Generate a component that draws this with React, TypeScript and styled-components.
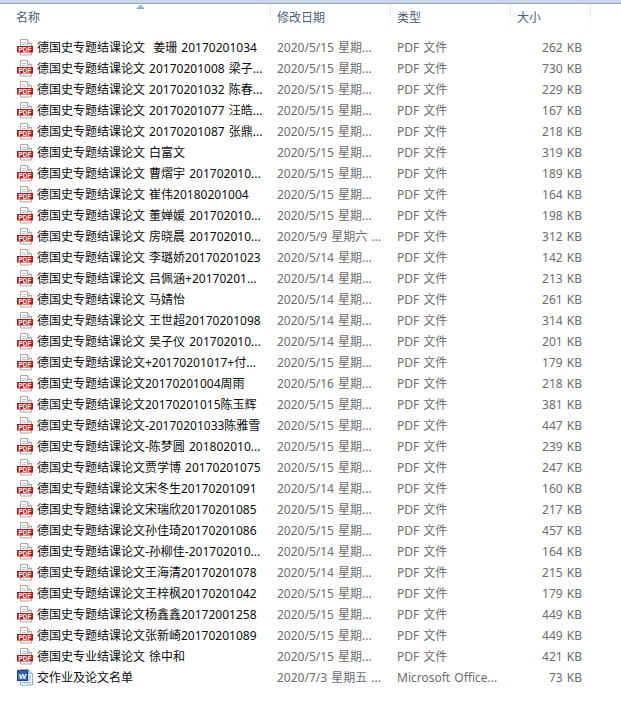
import React from "react";
import styled, { createGlobalStyle } from "styled-components";

const Global = createGlobalStyle`
  html, body { margin: 0; padding: 0; background: #fff; }
  body { font-family: "Noto Sans", "Noto Sans CJK SC", sans-serif; font-size: 12px; word-spacing: 1px; }
`;

const Page = styled.div`
  width: 621px;
  height: 702px;
  overflow: hidden;
  background: #fff;
`;

const TopBand = styled.div`
  height: 3px;
  background: #c9d6ea;
  border-bottom: 1px solid #97a3b4;
`;

const columns = "271px 120px 120px 80px";

const Header = styled.div`
  position: relative;
  display: grid;
  grid-template-columns: ${columns};
  height: 23px;
  margin-bottom: 10px;
`;

const HeaderCell = styled.div`
  padding-left: 6px;
  padding-top: 3px;
  line-height: 21px;
  color: #4c607a;
  border-right: 1px solid;
  border-image: linear-gradient(#dbe6f3, #eef3f9 70%, #fff) 1;
  box-sizing: border-box;
  &:first-child { padding-left: 16px; }
`;

const SortArrow = styled.svg`
  position: absolute;
  left: 136px;
  top: 0;
`;

const Row = styled.div`
  display: grid;
  grid-template-columns: ${columns};
  height: 21px;
  line-height: 21px;
  white-space: pre;
`;

const NameCell = styled.div`
  display: flex;
  align-items: center;
  gap: 4px;
  padding-left: 17px;
  color: #0c0c0c;
`;

const MetaCell = styled.div`
  padding-left: 6px;
  color: #6d6d6d;
`;

const SizeCell = styled.div`
  text-align: right;
  padding-right: 9px;
  color: #6d6d6d;
`;

const IconBox = styled.svg`
  flex: none;
  display: block;
`;

const PdfIcon = () => (
  <IconBox width="16" height="17" viewBox="0 0 16 17">
    <path d="M3.5.5h7l4 4v11.5h-11z" fill="#fbfbfb" stroke="#a9a9a9" />
    <path d="M10.5.5v4h4" fill="#eee" stroke="#a9a9a9" />
    <path d="M5 3.5h4M5 5.5h8" stroke="#c9c9c9" />
    <rect x="0" y="7" width="16" height="6.5" fill="#c01414" />
    <text x="8" y="12.6" textAnchor="middle" fontFamily="Liberation Sans" fontWeight="700" fontSize="6.4" fill="#fff">PDF</text>
  </IconBox>
);

const WordIcon = () => (
  <IconBox width="16" height="17" viewBox="0 0 16 17">
    <path d="M3.5.5h8l4 4v11.5h-12z" fill="#f7fafd" stroke="#8fa9c8" />
    <path d="M11.5.5v4h4" fill="#dfe9f4" stroke="#8fa9c8" />
    <path d="M11 7h3M11 9h3M11 11h3M5 13.5h9" stroke="#8fb0d6" />
    <rect x="0.5" y="1.5" width="10" height="10" fill="#2f66b4" stroke="#1d4586" />
    <text x="5.5" y="9.6" textAnchor="middle" fontFamily="Liberation Sans" fontWeight="700" fontSize="8" fill="#fff">W</text>
  </IconBox>
);

const P = "德国史专题结课论文";
const files: [string, string, string][] = [
  [P + "  姜珊 20170201034", "2020/5/15 星期...", "262 KB"],
  [P + " 20170201008 梁子...", "2020/5/15 星期...", "730 KB"],
  [P + " 20170201032 陈春...", "2020/5/15 星期...", "229 KB"],
  [P + " 20170201077 汪皓...", "2020/5/15 星期...", "167 KB"],
  [P + " 20170201087 张鼎...", "2020/5/15 星期...", "218 KB"],
  [P + " 白富文", "2020/5/15 星期...", "319 KB"],
  [P + " 曹熠宇 201702010...", "2020/5/15 星期...", "189 KB"],
  [P + " 崔伟20180201004", "2020/5/15 星期...", "164 KB"],
  [P + " 董婵媛 201702010...", "2020/5/15 星期...", "198 KB"],
  [P + " 房晓晨 201702010...", "2020/5/9 星期六 ...", "312 KB"],
  [P + " 李璐娇20170201023", "2020/5/14 星期...", "142 KB"],
  [P + " 吕佩涵+20170201...", "2020/5/14 星期...", "213 KB"],
  [P + " 马婧怡", "2020/5/14 星期...", "261 KB"],
  [P + " 王世超20170201098", "2020/5/14 星期...", "314 KB"],
  [P + " 吴子仪 201702010...", "2020/5/14 星期...", "201 KB"],
  [P + "+20170201017+付...", "2020/5/15 星期...", "179 KB"],
  [P + "20170201004周雨", "2020/5/16 星期...", "218 KB"],
  [P + "20170201015陈玉辉", "2020/5/15 星期...", "381 KB"],
  [P + "-20170201033陈雅雪", "2020/5/15 星期...", "447 KB"],
  [P + "-陈梦圆 201802010...", "2020/5/15 星期...", "239 KB"],
  [P + "贾学博 20170201075", "2020/5/15 星期...", "247 KB"],
  [P + "宋冬生20170201091", "2020/5/14 星期...", "160 KB"],
  [P + "宋瑞欣20170201085", "2020/5/15 星期...", "217 KB"],
  [P + "孙佳琦20170201086", "2020/5/15 星期...", "457 KB"],
  [P + "-孙柳佳-201702010...", "2020/5/14 星期...", "164 KB"],
  [P + "王海清20170201078", "2020/5/14 星期...", "215 KB"],
  [P + "王梓枫20170201042", "2020/5/15 星期...", "179 KB"],
  [P + "杨鑫鑫20172001258", "2020/5/15 星期...", "449 KB"],
  [P + "张新崎20170201089", "2020/5/15 星期...", "449 KB"],
  ["德国史专业结课论文 徐中和", "2020/5/15 星期...", "421 KB"],
];

export default function App() {
  return (
    <Page>
      <Global />
      <TopBand />
      <Header>
        <HeaderCell>名称</HeaderCell>
        <HeaderCell>修改日期</HeaderCell>
        <HeaderCell>类型</HeaderCell>
        <HeaderCell>大小</HeaderCell>
        <SortArrow width="9" height="6" viewBox="0 0 9 6">
          <path d="M1 4.5 4.5 1 8 4.5z" fill="#8fc3dd" stroke="#5a89a8" strokeWidth="0.6" />
        </SortArrow>
      </Header>
      {files.map(([name, date, size]) => (
        <Row key={name}>
          <NameCell><PdfIcon /><span>{name}</span></NameCell>
          <MetaCell>{date}</MetaCell>
          <MetaCell>PDF 文件</MetaCell>
          <SizeCell>{size}</SizeCell>
        </Row>
      ))}
      <Row>
        <NameCell><WordIcon /><span>交作业及论文名单</span></NameCell>
        <MetaCell>2020/7/3 星期五 ...</MetaCell>
        <MetaCell>Microsoft Office...</MetaCell>
        <SizeCell>73 KB</SizeCell>
      </Row>
    </Page>
  );
}
